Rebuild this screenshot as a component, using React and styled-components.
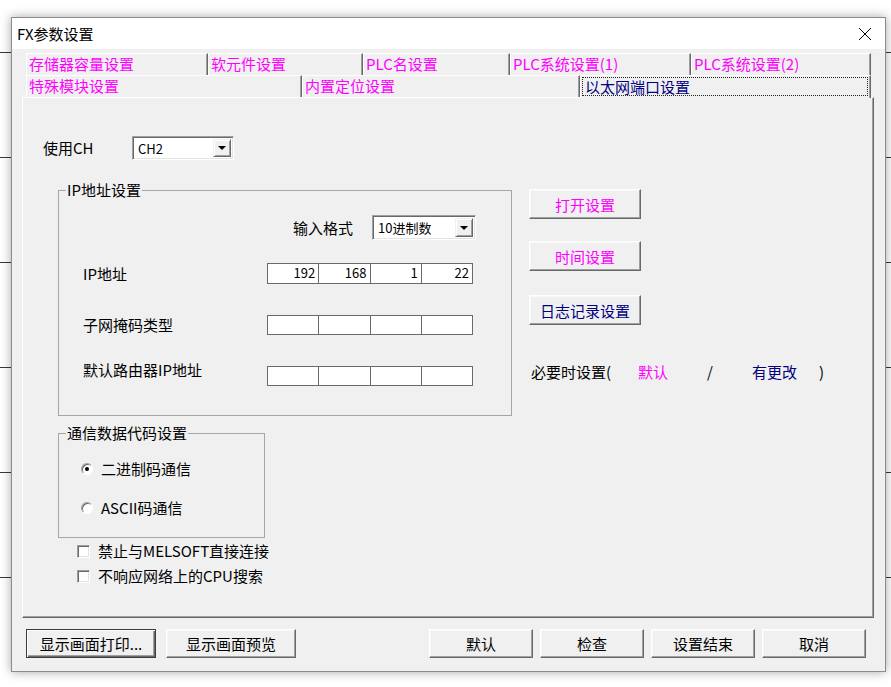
import styled, { createGlobalStyle } from 'styled-components'

const MAGENTA = '#ff00ff'
const NAVY = '#000080'

const GlobalStyle = createGlobalStyle`
  html, body { margin: 0; padding: 0; }
  body {
    min-height: 100vh;
    background-color: #fff;
    background-image: repeating-linear-gradient(to bottom, transparent 0, transparent 104px, #3a3a3a 104px, #3a3a3a 105px);
    background-position: 0 -52px;
    font-family: "Noto Sans CJK SC", "Noto Sans", sans-serif;
    font-size: 15px;
    color: #000;
  }
`

const Desktop = styled.div`
  padding: 17px 0 0 11px;
`

const Window = styled.div`
  width: 875px;
  height: 655px;
  box-sizing: border-box;
  border: 1px solid #8c8c8c;
  background: #f0f0f0;
  box-shadow: 0 0 10px rgba(0, 0, 0, 0.35);
  display: flex;
  flex-direction: column;
`

const TitleBar = styled.div`
  height: 31px;
  background: #fff;
  display: flex;
  align-items: center;
  justify-content: space-between;
  padding: 0 13px 0 5px;
`

const Title = styled.span`
  font-size: 15px;
  line-height: 20px;
`

const CloseBtn = styled.div`
  width: 14px;
  height: 14px;
  display: flex;
`

const Body = styled.div`
  padding: 4px 11px 0 10px;
  display: flex;
  flex-direction: column;
`

const TabStrip = styled.div`
  margin-left: 4px;
  width: 845px;
`

const TabRow = styled.div`
  display: flex;
  height: 22px;
`

const Tab = styled.div`
  width: ${({ $w }) => $w}px;
  box-sizing: border-box;
  border-top: 1px solid #fff;
  border-left: 1px solid #fff;
  border-right: 1px solid #696969;
  box-shadow: inset -1px 0 #a0a0a0;
  padding-left: 2px;
  color: ${MAGENTA};
  font-size: 15px;
  line-height: 20px;
  white-space: nowrap;
  background: #f0f0f0;
`

const ActiveTab = styled(Tab)`
  position: relative;
  z-index: 1;
  height: 23px;
  color: ${NAVY};
  padding: 1px 2px 2px 1px;
`

const FocusRect = styled.div`
  height: 100%;
  box-sizing: border-box;
  border: 1px dotted #222;
  line-height: 17px;
  padding-left: 2px;
`

const Panel = styled.div`
  height: 521px;
  box-sizing: border-box;
  border: 1px solid;
  border-color: #fff #696969 #696969 #fff;
  box-shadow: inset -1px -1px #a0a0a0;
  padding-left: 20px;
`

const ChRow = styled.div`
  display: flex;
  align-items: center;
  margin-top: 38px;
`

const Label = styled.span`
  width: ${({ $w }) => ($w ? `${$w}px` : 'auto')};
  flex: none;
  line-height: 20px;
  white-space: nowrap;
  color: ${({ $color }) => $color || '#000'};
  margin-left: ${({ $ml }) => $ml || 0}px;
  margin-top: ${({ $lift }) => ($lift ? `-${$lift}px` : 0)};
`

const Combo = styled.div`
  width: ${({ $w }) => $w}px;
  height: ${({ $h }) => $h}px;
  box-sizing: border-box;
  border: 1px solid;
  border-color: #a0a0a0 #fff #fff #a0a0a0;
  box-shadow: inset 1px 1px #696969, inset -1px -1px #e3e3e3;
  background: #fff;
  display: flex;
  align-items: center;
  padding: 2px;
`

const ComboText = styled.span`
  flex: 1;
  padding-left: 3px;
  font-size: 13px;
  line-height: 17px;
`

const DropBtn = styled.div`
  width: 18px;
  height: 100%;
  box-sizing: border-box;
  background: #f0f0f0;
  border: 1px solid;
  border-color: #f0f0f0 #696969 #696969 #f0f0f0;
  box-shadow: inset 1px 1px #fff, inset -1px -1px #a0a0a0;
  display: flex;
  align-items: center;
  justify-content: center;

  &::after {
    content: '';
    border-left: 4px solid transparent;
    border-right: 4px solid transparent;
    border-top: 4px solid #000;
  }
`

const Columns = styled.div`
  display: flex;
  margin: 22px 0 0 15px;
`

const LeftCol = styled.div`
  display: flex;
  flex-direction: column;
`

const Group = styled.fieldset`
  width: ${({ $w }) => $w}px;
  height: ${({ $h }) => $h}px;
  box-sizing: border-box;
  margin: ${({ $mt }) => $mt || 0}px 0 0 0;
  padding: 0 0 0 7px;
  border: 1px solid #a6a6a6;
  min-width: 0;
`

const Legend = styled.legend`
  padding: 0 1px;
  font-size: 15px;
  line-height: 16px;
`

const FormatRow = styled.div`
  display: flex;
  align-items: center;
  gap: 19px;
  height: 25px;
  margin: 17px 0 0 227px;
`

const FieldRow = styled.div`
  display: flex;
  align-items: center;
  padding-left: 17px;
  margin-top: ${({ $mt }) => $mt}px;
`

const IpField = styled.div`
  width: 206px;
  height: ${({ $h }) => $h}px;
  box-sizing: border-box;
  display: flex;
  border: 1px solid #6a6a6a;
  background: #fff;
`

const IpCell = styled.div`
  flex: 1;
  border-left: 1px solid #6a6a6a;
  text-align: right;
  padding-right: 3px;
  font-size: 13px;
  line-height: 18px;

  &:first-child {
    border-left: none;
  }
`

const RightCol = styled.div`
  display: flex;
  flex-direction: column;
  margin: 7px 0 0 17px;
`

const Button = styled.div`
  width: ${({ $w }) => $w}px;
  height: ${({ $h }) => $h}px;
  margin-top: ${({ $mt }) => $mt || 0}px;
  box-sizing: border-box;
  background: #f0f0f0;
  border: 1px solid;
  border-color: ${({ $focus }) => ($focus ? '#3c3c3c' : '#fff #696969 #696969 #fff')};
  box-shadow: ${({ $focus }) =>
    $focus
      ? 'inset 1px 1px #fff, inset -1px -1px #696969, inset -2px -2px #a0a0a0'
      : 'inset -1px -1px #a0a0a0, inset 1px 1px #f8f8f8'};
  color: ${({ $color }) => $color || '#000'};
  display: flex;
  align-items: center;
  justify-content: center;
  font-size: 15px;
  white-space: nowrap;
`

const NoteRow = styled.div`
  display: flex;
  align-items: center;
  margin-top: 37px;
  padding-left: 2px;
`

const RadioRow = styled.div`
  display: flex;
  align-items: center;
  gap: 8px;
  height: 20px;
  margin: ${({ $mt }) => $mt}px 0 0 15px;
`

const Radio = styled.div`
  width: 12px;
  height: 12px;
  box-sizing: border-box;
  border-radius: 50%;
  border: 1px solid;
  border-color: #a0a0a0 #fff #fff #a0a0a0;
  box-shadow: inset 1px 1px #696969;
  background: #fff;
  display: flex;
  align-items: center;
  justify-content: center;

  &::after {
    content: '';
    width: 4px;
    height: 4px;
    border-radius: 50%;
    background: ${({ $checked }) => ($checked ? '#000' : 'transparent')};
  }
`

const CheckRow = styled.div`
  display: flex;
  align-items: center;
  gap: 8px;
  height: 18px;
  margin: ${({ $mt }) => $mt}px 0 0 19px;
`

const Checkbox = styled.div`
  width: 13px;
  height: 13px;
  box-sizing: border-box;
  border: 1px solid;
  border-color: #a0a0a0 #fff #fff #a0a0a0;
  box-shadow: inset 1px 1px #696969, inset -1px -1px #e3e3e3;
  background: #fff;
`

const ButtonBar = styled.div`
  display: flex;
  align-items: center;
  margin-top: 11px;
  padding-left: 4px;
`

const BarGroup = styled.div`
  display: flex;
  gap: ${({ $gap }) => $gap}px;
  margin-left: ${({ $auto }) => ($auto ? 'auto' : '0')};
  margin-right: ${({ $mr }) => $mr || 0}px;
`

const row1 = [
  ['存储器容量设置', 182],
  ['软元件设置', 155],
  ['PLC名设置', 147],
  ['PLC系统设置(1)', 181],
  ['PLC系统设置(2)', 180],
]

export default function App() {
  return (
    <>
      <GlobalStyle />
      <Desktop>
        <Window>
          <TitleBar>
            <Title>FX参数设置</Title>
            <CloseBtn>
              <svg width="14" height="14" viewBox="0 0 14 14">
                <path d="M1 1 L13 13 M13 1 L1 13" stroke="#000" strokeWidth="1" fill="none" />
              </svg>
            </CloseBtn>
          </TitleBar>
          <Body>
            <TabStrip>
              <TabRow>
                {row1.map(([t, w]) => (
                  <Tab key={t} $w={w}>{t}</Tab>
                ))}
              </TabRow>
              <TabRow>
                <Tab $w={276}>特殊模块设置</Tab>
                <Tab $w={278}>内置定位设置</Tab>
                <ActiveTab $w={291}>
                  <FocusRect>以太网端口设置</FocusRect>
                </ActiveTab>
              </TabRow>
            </TabStrip>
            <Panel>
              <ChRow>
                <Label $w={89}>使用CH</Label>
                <Combo $w={102} $h={24}>
                  <ComboText>CH2</ComboText>
                  <DropBtn />
                </Combo>
              </ChRow>
              <Columns>
                <LeftCol>
                  <Group $w={454} $h={234}>
                    <Legend>IP地址设置</Legend>
                    <FormatRow>
                      <Label>输入格式</Label>
                      <Combo $w={104} $h={25}>
                        <ComboText>10进制数</ComboText>
                        <DropBtn />
                      </Combo>
                    </FormatRow>
                    <FieldRow $mt={23}>
                      <Label $w={184}>IP地址</Label>
                      <IpField $h={21}>
                        <IpCell>192</IpCell>
                        <IpCell>168</IpCell>
                        <IpCell>1</IpCell>
                        <IpCell>22</IpCell>
                      </IpField>
                    </FieldRow>
                    <FieldRow $mt={31}>
                      <Label $w={184}>子网掩码类型</Label>
                      <IpField $h={20}>
                        <IpCell />
                        <IpCell />
                        <IpCell />
                        <IpCell />
                      </IpField>
                    </FieldRow>
                    <FieldRow $mt={31}>
                      <Label $w={184} $lift={12}>默认路由器IP地址</Label>
                      <IpField $h={20}>
                        <IpCell />
                        <IpCell />
                        <IpCell />
                        <IpCell />
                      </IpField>
                    </FieldRow>
                  </Group>
                  <Group $w={207} $h={113} $mt={9}>
                    <Legend>通信数据代码设置</Legend>
                    <RadioRow $mt={18}>
                      <Radio $checked />
                      <Label>二进制码通信</Label>
                    </RadioRow>
                    <RadioRow $mt={19}>
                      <Radio />
                      <Label>ASCII码通信</Label>
                    </RadioRow>
                  </Group>
                  <CheckRow $mt={4}>
                    <Checkbox />
                    <Label>禁止与MELSOFT直接连接</Label>
                  </CheckRow>
                  <CheckRow $mt={7}>
                    <Checkbox />
                    <Label>不响应网络上的CPU搜索</Label>
                  </CheckRow>
                </LeftCol>
                <RightCol>
                  <Button $w={112} $h={30} $color={MAGENTA}>打开设置</Button>
                  <Button $w={112} $h={30} $mt={22} $color={MAGENTA}>时间设置</Button>
                  <Button $w={112} $h={30} $mt={24} $color={NAVY}>日志记录设置</Button>
                  <NoteRow>
                    <Label>必要时设置(</Label>
                    <Label $ml={27} $color={MAGENTA}>默认</Label>
                    <Label $ml={39}>/</Label>
                    <Label $ml={39} $color={NAVY}>有更改</Label>
                    <Label $ml={22}>)</Label>
                  </NoteRow>
                </RightCol>
              </Columns>
            </Panel>
            <ButtonBar>
              <BarGroup $gap={10}>
                <Button $w={130} $h={29} $focus>显示画面打印...</Button>
                <Button $w={130} $h={29}>显示画面预览</Button>
              </BarGroup>
              <BarGroup $gap={7} $auto $mr={8}>
                <Button $w={104} $h={29}>默认</Button>
                <Button $w={104} $h={29}>检查</Button>
                <Button $w={104} $h={29}>设置结束</Button>
                <Button $w={104} $h={29}>取消</Button>
              </BarGroup>
            </ButtonBar>
          </Body>
        </Window>
      </Desktop>
    </>
  )
}
